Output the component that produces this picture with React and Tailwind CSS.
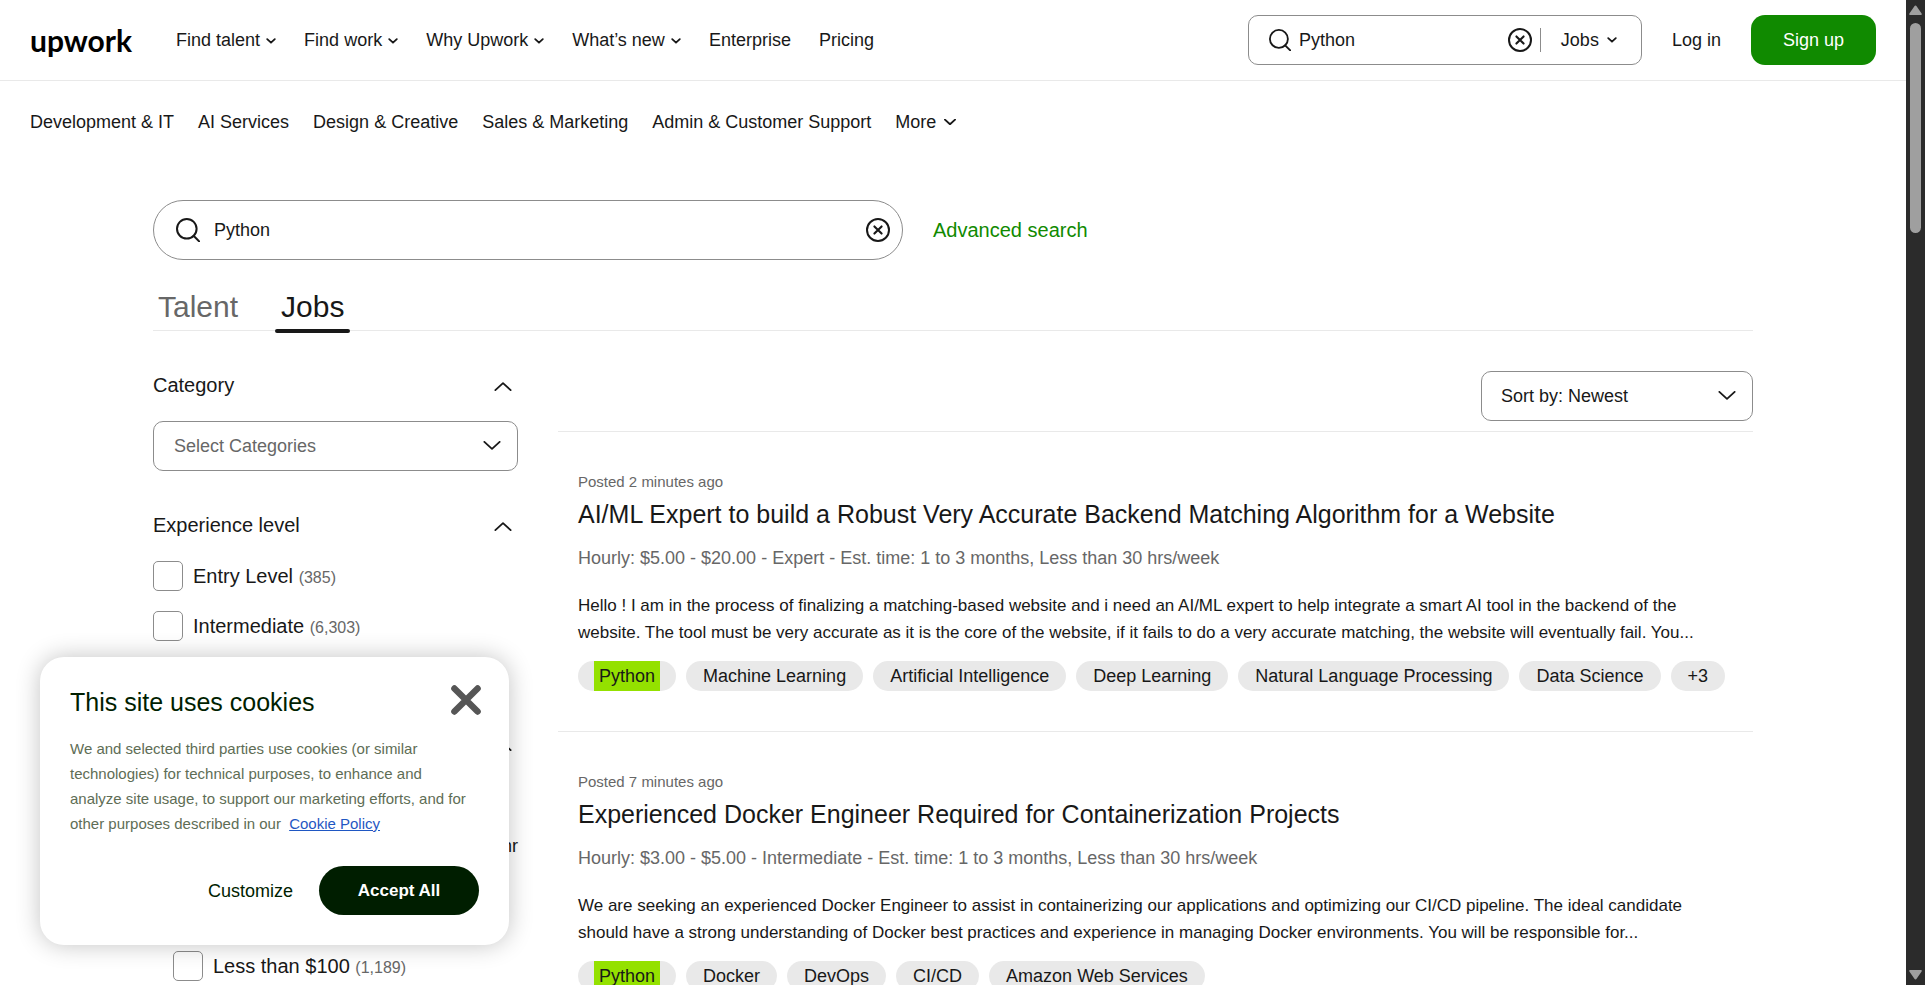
import React from "react";

const NAV = [
  { label: "Find talent", menu: true },
  { label: "Find work", menu: true },
  { label: "Why Upwork", menu: true },
  { label: "What’s new", menu: true },
  { label: "Enterprise" },
  { label: "Pricing" },
];

const CATEGORIES = [
  "Development & IT",
  "AI Services",
  "Design & Creative",
  "Sales & Marketing",
  "Admin & Customer Support",
];

const JOBS = [
  {
    posted: "Posted 2 minutes ago",
    title: "AI/ML Expert to build a Robust Very Accurate Backend Matching Algorithm for a Website",
    rate: "Hourly: $5.00 - $20.00",
    level: "Expert",
    time: "Est. time: 1 to 3 months, Less than 30 hrs/week",
    lines: [
      "Hello ! I am in the process of finalizing a matching-based website and i need an AI/ML expert to help integrate a smart AI tool in the backend of the",
      "website. The tool must be very accurate as it is the core of the website, if it fails to do a very accurate matching, the website will eventually fail. You...",
    ],
    skills: [
      "Machine Learning",
      "Artificial Intelligence",
      "Deep Learning",
      "Natural Language Processing",
      "Data Science",
      "+3",
    ],
  },
  {
    posted: "Posted 7 minutes ago",
    title: "Experienced Docker Engineer Required for Containerization Projects",
    rate: "Hourly: $3.00 - $5.00",
    level: "Intermediate",
    time: "Est. time: 1 to 3 months, Less than 30 hrs/week",
    lines: [
      "We are seeking an experienced Docker Engineer to assist in containerizing our applications and optimizing our CI/CD pipeline. The ideal candidate",
      "should have a strong understanding of Docker best practices and experience in managing Docker environments. You will be responsible for...",
    ],
    skills: ["Docker", "DevOps", "CI/CD", "Amazon Web Services"],
  },
];

function Chevron({ className = "", up = false, stroke = 2 }) {
  return (
    <svg viewBox="0 0 20 10" fill="none" stroke="currentColor" strokeWidth={stroke} strokeLinecap="round" strokeLinejoin="round" className={className} aria-hidden="true">
      <path d={up ? "M1.500 9 10 1.200 18.500 9" : "M1.500 1 10 8.800 18.500 1"} />
    </svg>
  );
}

function SmallChevron({ className = "" }) {
  return (
    <svg viewBox="0 0 10 6" fill="none" stroke="currentColor" strokeWidth="1.8" strokeLinecap="round" strokeLinejoin="round" className={"h-[6px] w-[10px] " + className} aria-hidden="true">
      <path d="M1.200 1.100 5 4.700 8.800 1.100" />
    </svg>
  );
}

function SearchIcon({ className }) {
  return (
    <svg viewBox="0 0 24 24" fill="none" stroke="currentColor" strokeWidth="2" className={className} aria-hidden="true">
      <circle cx="10.8" cy="10.8" r="9.8" />
      <path d="M17.6 17.8 23.2 23.4" strokeLinecap="round" />
    </svg>
  );
}

function ClearIcon() {
  return (
    <svg viewBox="0 0 24 24" fill="none" stroke="currentColor" strokeWidth="2" className="size-6" aria-hidden="true">
      <circle cx="12" cy="12" r="11" />
      <path d="M8.4 8.4 15.6 15.6M15.6 8.4 8.4 15.6" strokeLinecap="round" strokeWidth="2.1" />
    </svg>
  );
}

function Section({ title, children }) {
  return (
    <section>
      <button type="button" className="mb-[22px] flex h-7 w-full items-center justify-between pr-1.5 text-xl">
        {title}
        <Chevron up className="mt-0.5 h-[9px] w-[18px]" />
      </button>
      {children}
    </section>
  );
}

function Check({ label, count }) {
  return (
    <label className="flex h-[30px] items-center gap-[10px] text-xl">
      <input type="checkbox" className="size-[30px] shrink-0 appearance-none rounded-[5px] border border-[#8c8c8c] bg-white" />
      <span>
        {label} {count && <span className="text-base text-[#676767]">({count})</span>}
      </span>
    </label>
  );
}

function RateInput({ label }) {
  return (
    <label className="flex items-center gap-2 text-lg">
      <input type="text" aria-label={label} className="h-[30px] w-28 rounded-lg border border-[#8c8c8c] px-3" />
      /hr
    </label>
  );
}

function Job({ job }) {
  return (
    <article className="border-b border-[#e9e9e9] px-5 py-10">
      <p className="text-[15px] leading-5 text-[#676767]">{job.posted}</p>
      <h2 className="mt-[7px] text-[25px] leading-[30px]">
        <a href="#job">{job.title}</a>
      </h2>
      <p className="mt-[17px] text-lg leading-6 text-[#676767]">
        {job.rate} - {job.level} - {job.time}
      </p>
      <p className="mt-[22px] text-[17px] leading-[27px]">
        {job.lines[0]}
        <br />
        {job.lines[1]}
      </p>
      <ul className="mt-[15px] flex gap-[10px] text-lg leading-[30px]">
        <li className="rounded-full bg-[#e9e9e9] px-4">
          <a href="#skill" className="block"><mark className="block bg-[#94e100] px-[5px] text-[#181818]">Python</mark></a>
        </li>
        {job.skills.map((s) => (
          <li key={s} className="rounded-full bg-[#e9e9e9] px-[17px]">
            <a href="#skill">{s}</a>
          </li>
        ))}
      </ul>
    </article>
  );
}

function Header() {
  return (
    <header className="flex items-center justify-between border-b border-[#e9e9e9] px-[30px] py-[15px]">
      <div className="flex items-center">
        <a href="#home" className="mr-11 font-[Lato,sans-serif] text-[30px] leading-[42px] font-bold text-black">upwork</a>
        <nav aria-label="Main" className="flex items-center gap-7 text-lg">
          {NAV.map((n) =>
            n.menu ? (
              <button key={n.label} type="button" className="flex items-center gap-1.5">
                {n.label}
                <SmallChevron className="mt-0.5" />
              </button>
            ) : (
              <a key={n.label} href="#page">{n.label}</a>
            )
          )}
        </nav>
      </div>
      <div className="flex items-center">
        <form className="flex h-[50px] w-[394px] items-center rounded-[10px] border border-[#8c8c8c] pr-6 pl-5 text-lg">
          <SearchIcon className="size-[22px] shrink-0" />
          <input type="text" aria-label="Search Upwork" defaultValue="Python" className="ml-2 min-w-0 flex-1 outline-none" />
          <button type="button" aria-label="Clear search"><ClearIcon /></button>
          <span className="mx-2 h-6 w-px bg-[#8c8c8c]" />
          <button type="button" className="ml-3 flex items-center gap-2">
            Jobs
            <SmallChevron />
          </button>
        </form>
        <a href="#login" className="ml-[30px] text-lg">Log in</a>
        <a href="#signup" className="ml-[30px] rounded-[14px] bg-[#108a00] px-8 text-lg leading-[50px] text-white">Sign up</a>
      </div>
    </header>
  );
}

function Cookies() {
  return (
    <section role="dialog" aria-label="This site uses cookies" className="absolute bottom-10 left-10 w-[469px] rounded-3xl bg-white p-[30px] text-[#001e00] shadow-[0_0_24px_rgba(0,0,0,0.24)]">
      <div className="flex items-center justify-between">
        <h2 className="text-[25px] leading-[30px]">This site uses cookies</h2>
        <button type="button" aria-label="Close" className="-mr-0.5 -mt-1">
          <svg viewBox="0 0 30 30" stroke="#565656" strokeWidth="6.4" strokeLinecap="round" className="size-[30px]" aria-hidden="true">
            <path d="M3.4 3.4 26.6 26.6M26.6 3.4 3.4 26.6" />
          </svg>
        </button>
      </div>
      <p className="mt-[19px] text-[15px] leading-[25px] text-[#5e6d55]">
        We and selected third parties use cookies (or similar
        <br />
        technologies) for technical purposes, to enhance and
        <br />
        analyze site usage, to support our marketing efforts, and for
        <br />
        other purposes described in our{" "}
        <a href="#cookies" className="ml-1 text-[#1f57c3] underline">Cookie Policy</a>
      </p>
      <div className="mt-[30px] flex justify-end gap-[26px]">
        <button type="button" className="text-lg">Customize</button>
        <button type="button" className="h-[49px] w-40 rounded-full bg-[#001e00] text-[17px] font-bold text-white">Accept All</button>
      </div>
    </section>
  );
}

export default function App() {
  return (
    <div className="flex h-screen overflow-hidden bg-white font-['Liberation_Sans',Arial,sans-serif] text-[#181818]">
      <div className="relative min-w-0 flex-1 overflow-hidden">
        <Header />
        <nav aria-label="Categories" className="flex h-[82px] items-center gap-6 px-[30px] text-lg">
          {CATEGORIES.map((c) => (
            <a key={c} href="#category">{c}</a>
          ))}
          <button type="button" className="flex items-center gap-2">
            More
            <Chevron stroke={3} className="h-[6px] w-[12px]" />
          </button>
        </nav>
        <main className="mx-auto max-w-[1600px] pt-[37px]">
          <div className="flex items-center gap-[30px]">
            <form className="flex h-[60px] w-[750px] items-center rounded-full border border-[#8c8c8c] pr-3 pl-[22px] text-lg">
              <SearchIcon className="size-6 shrink-0" />
              <input type="text" aria-label="Search jobs" defaultValue="Python" className="ml-[14px] min-w-0 flex-1 outline-none" />
              <button type="button" aria-label="Clear"><ClearIcon /></button>
            </form>
            <a href="#advanced" className="text-xl text-[#108a00]">Advanced search</a>
          </div>
          <div role="tablist" className="mt-[25px] flex gap-8 border-b border-[#e9e9e9] text-[30px] leading-[44px]">
            <button type="button" role="tab" aria-selected="false" className="-mb-[3px] px-[5px] pb-1 text-[#676767]">Talent</button>
            <button type="button" role="tab" aria-selected="true" className="relative -mb-[3px] px-1.5 pb-1">
              Jobs
              <span className="absolute inset-x-0 bottom-0 h-1 rounded-sm bg-[#181818]" />
            </button>
          </div>
          <div className="flex gap-10 pt-10">
            <aside className="flex w-[365px] shrink-0 flex-col gap-10">
              <Section title="Category">
                <div className="relative">
                  <select aria-label="Category" className="h-[50px] w-full appearance-none rounded-[10px] border border-[#8c8c8c] bg-white px-5 text-lg text-[#676767]">
                    <option>Select Categories</option>
                  </select>
                  <Chevron className="pointer-events-none absolute top-5 right-[17px] h-[9px] w-[18px]" />
                </div>
              </Section>
              <Section title="Experience level">
                <div className="flex flex-col gap-5">
                  <Check label="Entry Level" count="385" />
                  <Check label="Intermediate" count="6,303" />
                  <Check label="Expert" />
                </div>
              </Section>
              <Section title="Job type">
                <Check label="Hourly" />
                <div className="mt-5 mb-10 flex h-[30px] justify-between pl-5">
                  <RateInput label="Minimum rate" />
                  <RateInput label="Maximum rate" />
                </div>
                <Check label="Fixed-Price" />
                <div className="mt-5 pl-5">
                  <Check label="Less than $100" count="1,189" />
                </div>
              </Section>
            </aside>
            <div className="min-w-0 flex-1">
              <div className="flex justify-end border-b border-[#e9e9e9] pb-[10px]">
                <div className="relative w-[272px]">
                  <select aria-label="Sort by" className="h-[50px] w-full appearance-none rounded-[10px] border border-[#8c8c8c] bg-white px-[19px] text-lg">
                    <option>Sort by: Newest</option>
                  </select>
                  <Chevron className="pointer-events-none absolute top-5 right-[17px] h-[9px] w-[18px]" />
                </div>
              </div>
              {JOBS.map((j) => (
                <Job key={j.title} job={j} />
              ))}
            </div>
          </div>
        </main>
        <Cookies />
      </div>
      <div aria-hidden="true" className="flex w-[19px] flex-col items-center bg-[#2b2b2b] py-[5px]">
        <svg viewBox="0 0 13 10" className="h-[10px] w-[13px]" fill="#9f9f9f"><path d="M5.4 1.2a1.3 1.3 0 0 1 2.2 0l5 7.2a1 1 0 0 1-.8 1.5H1.2a1 1 0 0 1-.8-1.5z" /></svg>
        <span className="mt-2 h-[210px] w-[11px] rounded-full bg-[#9f9f9f]" />
        <svg viewBox="0 0 13 10" className="mt-auto h-[10px] w-[13px]" fill="#9f9f9f"><path d="M5.4 8.8a1.3 1.3 0 0 0 2.2 0l5-7.2a1 1 0 0 0-.8-1.5H1.2a1 1 0 0 0-.8 1.5z" /></svg>
      </div>
    </div>
  );
}
